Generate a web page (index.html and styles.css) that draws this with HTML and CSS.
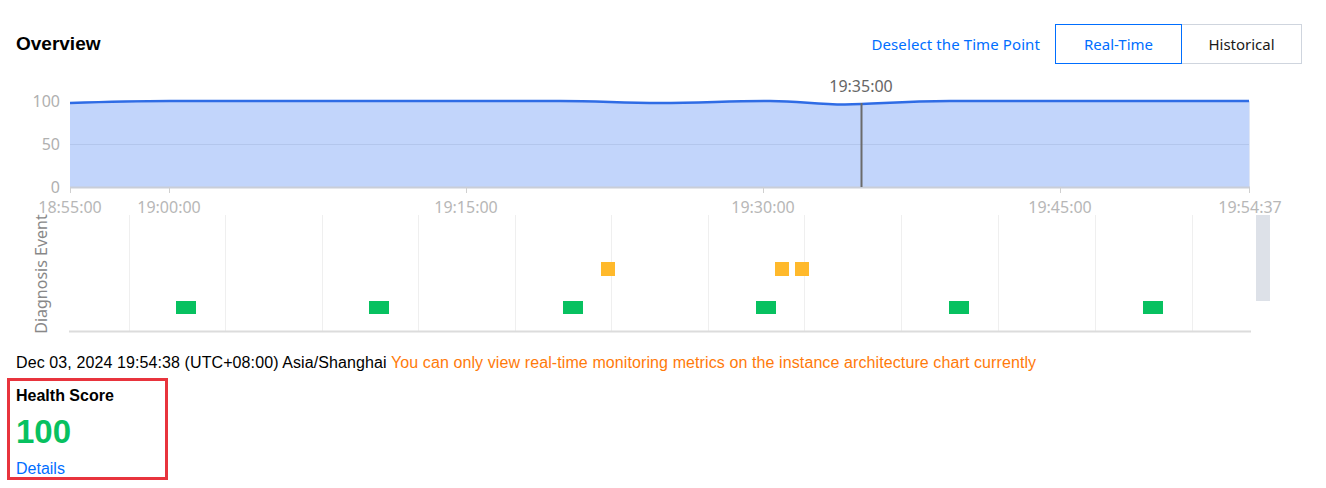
FILE: index.html
```html
<!DOCTYPE html>
<html lang="en">
<head>
    <meta charset="UTF-8">
    <title>Overview</title>
    <link rel="stylesheet" href="styles.css">
</head>
<body>
    <div class="header">
        <h2 class="title">Overview</h2>
        <div class="actions">
            <a class="link" href="#">Deselect the Time Point</a>
            <div class="switch">
                <button class="seg active">Real-Time</button>
                <button class="seg">Historical</button>
            </div>
        </div>
    </div>

    <!-- trend + diagnosis events -->
    <svg class="chart" viewBox="0 64 1326 276" width="1326" height="276">
        <g class="ylabels">
            <text x="60" y="101">100</text>
            <text x="60" y="144">50</text>
            <text x="60" y="187">0</text>
        </g>
        <path class="area" d="M70,103 C100,102 130,101 170,101 L560,101 C600,101 620,103 660,103 C700,103 730,101 770,101 C800,101 815,104.5 845,104.5 C875,104.5 900,101 950,101 L1249,101 L1249,187 L70,187 Z"/>
        <line class="grid50" x1="70" y1="144.5" x2="1249" y2="144.5"/>
        <line class="rightedge" x1="1249.5" y1="101" x2="1249.5" y2="187"/>
        <path class="trend" d="M70,103 C100,102 130,101 170,101 L560,101 C600,101 620,103 660,103 C700,103 730,101 770,101 C800,101 815,104.5 845,104.5 C875,104.5 900,101 950,101 L1249,101"/>
        <line class="axis" x1="70" y1="187.5" x2="1250" y2="187.5"/>
        <g class="ticks">
            <line x1="70.5" y1="187" x2="70.5" y2="193"/>
            <line x1="169.5" y1="187" x2="169.5" y2="193"/>
            <line x1="466.5" y1="187" x2="466.5" y2="193"/>
            <line x1="763.5" y1="187" x2="763.5" y2="193"/>
            <line x1="1060.5" y1="187" x2="1060.5" y2="193"/>
            <line x1="1249.5" y1="187" x2="1249.5" y2="193"/>
        </g>
        <line class="cursor" x1="861.5" y1="103" x2="861.5" y2="187"/>
        <text class="cursor-label" x="861" y="86">19:35:00</text>
        <g class="xlabels">
            <text x="70" y="207">18:55:00</text>
            <text x="169" y="207">19:00:00</text>
            <text x="466" y="207">19:15:00</text>
            <text x="763" y="207">19:30:00</text>
            <text x="1060" y="207">19:45:00</text>
            <text x="1250" y="207">19:54:37</text>
        </g>

        <g class="vgrid">
            <line x1="129.5" y1="215" x2="129.5" y2="331"/>
            <line x1="225.5" y1="215" x2="225.5" y2="331"/>
            <line x1="322.5" y1="215" x2="322.5" y2="331"/>
            <line x1="418.5" y1="215" x2="418.5" y2="331"/>
            <line x1="515.5" y1="215" x2="515.5" y2="331"/>
            <line x1="611.5" y1="215" x2="611.5" y2="331"/>
            <line x1="708.5" y1="215" x2="708.5" y2="331"/>
            <line x1="804.5" y1="215" x2="804.5" y2="331"/>
            <line x1="901.5" y1="215" x2="901.5" y2="331"/>
            <line x1="998.5" y1="215" x2="998.5" y2="331"/>
            <line x1="1095.5" y1="215" x2="1095.5" y2="331"/>
            <line x1="1192.5" y1="215" x2="1192.5" y2="331"/>
        </g>
        <line class="baseline" x1="69" y1="331.5" x2="1251" y2="331.5"/>
        <text class="ytitle" transform="translate(41,274) rotate(-90)">Diagnosis Event</text>

        <g class="ok">
            <rect x="176" y="301" width="20" height="13"/>
            <rect x="369" y="301" width="20" height="13"/>
            <rect x="563" y="301" width="20" height="13"/>
            <rect x="756" y="301" width="20" height="13"/>
            <rect x="949" y="301" width="20" height="13"/>
            <rect x="1143" y="301" width="20" height="13"/>
        </g>
        <g class="warn">
            <rect x="601" y="262" width="14" height="14"/>
            <rect x="775" y="262" width="14" height="14"/>
            <rect x="795" y="262" width="14" height="14"/>
        </g>
        <rect class="scroll" x="1256" y="215" width="14" height="86"/>
    </svg>

    <p class="info">Dec 03, 2024 19:54:38 (UTC+08:00) Asia/Shanghai <span class="notice">You can only view real-time monitoring metrics on the instance architecture chart currently</span></p>

    <div class="score-card">
        <div class="score-title">Health Score</div>
        <div class="score-value">100</div>
        <a class="score-link" href="#">Details</a>
    </div>
</body>
</html>
```

FILE: styles.css
```css
body {
    margin: 0;
    font-family: "Liberation Sans", Arial, sans-serif;
    font-size: 16px;
    color: #000;
    background: #fff;
}
.header {
    display: flex;
    justify-content: space-between;
    align-items: center;
    height: 40px;
    padding: 24px 24px 0 16px;
}
.title {
    margin: 0;
    font-size: 19px;
    font-weight: bold;
}
.actions {
    display: flex;
    align-items: center;
    gap: 15px;
}
.link {
    color: #006eff;
    text-decoration: none;
    font-family: "Noto Sans", sans-serif;
    font-size: 15px;
    letter-spacing: 0.1px;
}
.switch {
    display: flex;
}
.seg {
    height: 40px;
    background: #fff;
    border: 1px solid #cfd5de;
    color: #1a1a1a;
    font-family: "Noto Sans", sans-serif;
    font-size: 15px;
    width: 121px;
    padding: 0;
    cursor: pointer;
}
.seg.active {
    width: 127px;
    border-color: #006eff;
    color: #006eff;
    margin-right: -1px;
    position: relative;
}
.chart {
    display: block;
    font-family: "Noto Sans", sans-serif;
    font-size: 16px;
}
.ylabels text {
    fill: #b0b0b0;
    text-anchor: end;
    dominant-baseline: central;
}
.area {
    fill: #c2d5fb;
}
.grid50 {
    stroke: #b3c6ec;
    stroke-width: 1;
}
.rightedge {
    stroke: #dfe6f5;
}
.trend {
    fill: none;
    stroke: #2f6ce5;
    stroke-width: 2.5;
}
.axis {
    stroke: #c9ced8;
    stroke-width: 2;
}
.ticks line {
    stroke: #d0d0d0;
}
.cursor {
    stroke: #6b6b6b;
    stroke-width: 2;
}
.cursor-label {
    fill: #666;
    text-anchor: middle;
    dominant-baseline: central;
}
.xlabels text {
    fill: #b7b7b7;
    text-anchor: middle;
    dominant-baseline: central;
}
.vgrid line {
    stroke: #efefef;
    stroke-width: 1;
}
.baseline {
    stroke: #dcdcdc;
    stroke-width: 2;
}
.ytitle {
    fill: #888;
    text-anchor: middle;
    dominant-baseline: central;
}
.ok rect {
    fill: #07c160;
}
.warn rect {
    fill: #ffb92b;
}
.scroll {
    fill: #dde1e8;
}
.info {
    margin: 13px 0 0 16px;
    line-height: 20px;
    letter-spacing: 0.1px;
}
.notice {
    color: #ff7a0a;
}
.score-card {
    box-sizing: border-box;
    width: 161px;
    height: 102px;
    margin: 5px 0 0 7px;
    padding: 5px 6px 0;
    border: 3px solid #e8343d;
}
.score-title {
    font-weight: bold;
    line-height: 20px;
}
.score-value {
    margin-top: 8px;
    font-size: 33px;
    font-weight: bold;
    line-height: 36px;
    color: #07c160;
}
.score-link {
    display: block;
    margin-top: 10px;
    line-height: 18px;
    color: #006eff;
    text-decoration: none;
}
```
